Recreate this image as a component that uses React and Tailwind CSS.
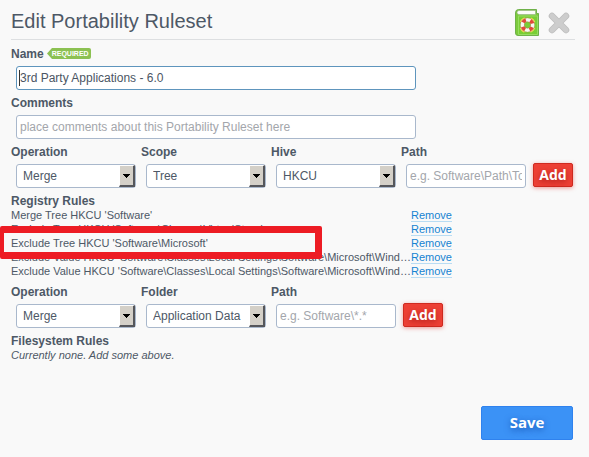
import { useState } from "react"

const registryRules = [
  { id: 1, text: "Merge Tree HKCU 'Software'" },
  { id: 2, text: "Exclude Tree HKCU 'Software\\Classes\\VirtualStore'" },
  { id: 3, text: "Exclude Tree HKCU 'Software\\Microsoft'", marked: true },
  { id: 4, text: "Exclude Value HKCU 'Software\\Classes\\Local Settings\\Software\\Microsoft\\Wind…" },
  { id: 5, text: "Exclude Value HKCU 'Software\\Classes\\Local Settings\\Software\\Microsoft\\Wind…" },
]

const inputClass =
  "block h-6 rounded-[3px] border border-[#a9b8cc] bg-white px-[3px] text-[12px] text-[#4b5563] placeholder:text-[#a3a6ab] outline-none focus:border-[#5e95bd]"

function Label({ htmlFor, children }) {
  return (
    <label htmlFor={htmlFor} className="flex h-[25px] items-center text-[12px] font-bold">
      {children}
    </label>
  )
}

function SelectField({ id, label, options }) {
  return (
    <div>
      <Label htmlFor={id}>{label}</Label>
      <div className="relative mx-[5px]">
        <select
          id={id}
          className="block h-6 w-full appearance-none rounded-[3px] border border-[#a9b8cc] bg-white pr-4 pl-1.5 text-[12px] outline-none"
        >
          {options.map((option) => (
            <option key={option}>{option}</option>
          ))}
        </select>
        <span className="pointer-events-none absolute inset-y-px right-px flex w-4 items-center justify-center border-t border-r-2 border-b-2 border-l border-t-white border-r-[#55565a] border-b-[#55565a] border-l-white bg-[#d4d0c8]">
          <svg width="7" height="4" viewBox="0 0 7 4" shapeRendering="crispEdges">
            <path d="M0 0h7v1H0zM1 1h5v1H1zM2 2h3v1H2zM3 3h1v1H3z" fill="#000" />
          </svg>
        </span>
      </div>
    </div>
  )
}

function PathField({ id, placeholder }) {
  return (
    <div>
      <Label htmlFor={id}>Path</Label>
      <div className="mx-[5px]">
        <input id={id} type="text" placeholder={placeholder} className={`${inputClass} w-full`} />
      </div>
    </div>
  )
}

function AddButton() {
  return (
    <div className="flex items-end pb-px pl-0.5">
      <button
        type="button"
        className="h-6 w-10 rounded-[2px] border border-[#cf2a20] bg-[#ee4035] font-['Open_Sans',sans-serif] text-[14px] leading-none font-bold text-white shadow-[0_1px_4px_rgba(230,60,50,0.5)] [text-shadow:0_2px_6px_rgba(120,0,0,0.6)]"
      >
        Add
      </button>
    </div>
  )
}

function HelpIcon() {
  return (
    <svg width="24" height="28" viewBox="0 0 24 28">
      <path d="M0.500 4Q0.500 0.500 3.500 0.500H21.500V4.500H23.500V26.500H3Q0.500 26.500 0.500 24z" fill="#7ccb3c" stroke="#6fb14a" />
      <path d="M2 3.500Q2 1.500 4 1.500H20.500V5.500H4Q2 5.500 2 3.500z" fill="#fbfdf9" stroke="#93b27f" strokeWidth="0.600" />
      <path d="M3.500 7H22.500V25.500H3.500z" fill="#79cf35" stroke="#97dc62" />
      <circle cx="12.500" cy="16" r="7.400" fill="none" stroke="#f3dc52" strokeWidth="2" strokeDasharray="5.600 6.024" strokeDashoffset="-3.012" />
      <circle cx="12.500" cy="16" r="5.200" fill="none" stroke="#f8f6f2" strokeWidth="3.800" />
      <circle cx="12.500" cy="16" r="5.200" fill="none" stroke="#e2483a" strokeWidth="3.800" strokeDasharray="3.600 4.568" strokeDashoffset="-2.284" />
      <circle cx="12.500" cy="16" r="3.200" fill="none" stroke="#a9794d" strokeWidth="0.500" />
      <circle cx="12.500" cy="16" r="7.200" fill="none" stroke="#b8845a" strokeWidth="0.400" />
    </svg>
  )
}

export default function App() {
  const [name, setName] = useState("3rd Party Applications - 6.0")
  const [comments, setComments] = useState("")
  const [rules, setRules] = useState(registryRules)

  const removeRule = (e, id) => {
    e.preventDefault()
    setRules(rules.filter((rule) => rule.id !== id))
  }

  return (
    <div className="min-h-screen overflow-hidden bg-[#f9f9f9] pr-3.5 pb-4 pl-[11px] font-['Liberation_Sans',Arial,sans-serif] text-[#4d5866]">
      {/* Header */}
      <header className="flex h-10 items-end justify-between border-b border-[#dddfe1] pb-0.5">
        <h1 className="pb-1 text-[20px] leading-6">Edit Portability Ruleset</h1>
        <div className="flex items-center gap-2 pr-1">
          <button type="button" aria-label="Help">
            <HelpIcon />
          </button>
          <button type="button" aria-label="Close">
            <svg width="24" height="24" viewBox="0 0 24 24">
              <path d="M5 5l14 14M19 5L5 19" stroke="#bdbdbd" strokeWidth="6.500" strokeLinecap="round" />
              <path d="M5 5l14 14M19 5L5 19" stroke="#cdcdcd" strokeWidth="5" strokeLinecap="round" />
            </svg>
          </button>
        </div>
      </header>

      <form className="pt-px" onSubmit={(e) => e.preventDefault()}>
        {/* Name */}
        <Label htmlFor="name">
          Name
          <span className="ml-[3px] flex items-center">
            <svg width="5" height="11" viewBox="0 0 5 11">
              <path d="M5 0v11L0 5.500z" fill="#8cc152" />
            </svg>
            <span className="h-[11px] rounded-r-[2px] bg-[#8cc152] pr-0.5 font-['Liberation_Sans',sans-serif] text-[7px] leading-[11px] font-bold text-white">
              REQUIRED
            </span>
          </span>
        </Label>
        <div className="relative mx-[5px]">
          <input
            id="name"
            type="text"
            autoFocus
            value={name}
            onChange={(e) => setName(e.target.value)}
            className={`${inputClass} w-[400px] max-w-full caret-transparent`}
          />
          {/* caret */}
          <span className="pointer-events-none absolute top-1 left-[3px] h-4 w-px bg-[#333]"></span>
        </div>

        {/* Comments */}
        <Label htmlFor="comments">Comments</Label>
        <div className="mx-[5px]">
          <input
            id="comments"
            type="text"
            placeholder="place comments about this Portability Ruleset here"
            value={comments}
            onChange={(e) => setComments(e.target.value)}
            className={`${inputClass} w-[400px] max-w-full`}
          />
        </div>

        {/* Registry rules */}
        <div className="grid grid-cols-[repeat(4,minmax(0,1fr))_44px]">
          <SelectField id="reg-operation" label="Operation" options={["Merge", "Exclude"]} />
          <SelectField id="reg-scope" label="Scope" options={["Tree", "Value"]} />
          <SelectField id="reg-hive" label="Hive" options={["HKCU", "HKLM"]} />
          <PathField id="reg-path" placeholder="e.g. Software\Path\To" />
          <AddButton />
        </div>
        <h2 className="pt-1.5 text-[12px] leading-[14px] font-bold">Registry Rules</h2>
        <ul className="text-[11px] leading-[14px]">
          {rules.map((rule) => (
            <li key={rule.id} className="relative flex">
              <span className="w-[400px] whitespace-nowrap">{rule.text}</span>
              <a
                href="#remove"
                onClick={(e) => removeRule(e, rule.id)}
                className="h-[14px] border-b border-[#b9dcf3] leading-[14px] text-[#1683d2]"
              >
                Remove
              </a>
              {rule.marked && (
                <span className="pointer-events-none absolute -top-2.5 -left-[11px] z-10 h-[33px] w-[322px] rounded-[2px] border-7 border-l-4 border-[#ed1c24]"></span>
              )}
            </li>
          ))}
        </ul>

        {/* Filesystem rules */}
        <div className="grid grid-cols-[repeat(4,minmax(0,1fr))_44px] pt-px">
          <SelectField id="fs-operation" label="Operation" options={["Merge", "Exclude"]} />
          <SelectField id="fs-folder" label="Folder" options={["Application Data", "Documents"]} />
          <PathField id="fs-path" placeholder="e.g. Software\*.*" />
          <AddButton />
        </div>
        <h2 className="pt-1.5 text-[12px] leading-[14px] font-bold">Filesystem Rules</h2>
        <p className="text-[11px] leading-[14px] italic">Currently none. Add some above.</p>

        {/* Save */}
        <div className="mt-11 flex justify-end pr-0.5">
          <button
            type="submit"
            className="h-[34px] w-[92px] rounded-[2px] border border-[#2f82ee] bg-[#3b92f6] pb-0.5 font-['Open_Sans',sans-serif] text-[15px] leading-none font-bold text-white [text-shadow:0_2px_6px_rgba(0,50,140,0.6)]"
          >
            Save
          </button>
        </div>
      </form>
    </div>
  )
}
